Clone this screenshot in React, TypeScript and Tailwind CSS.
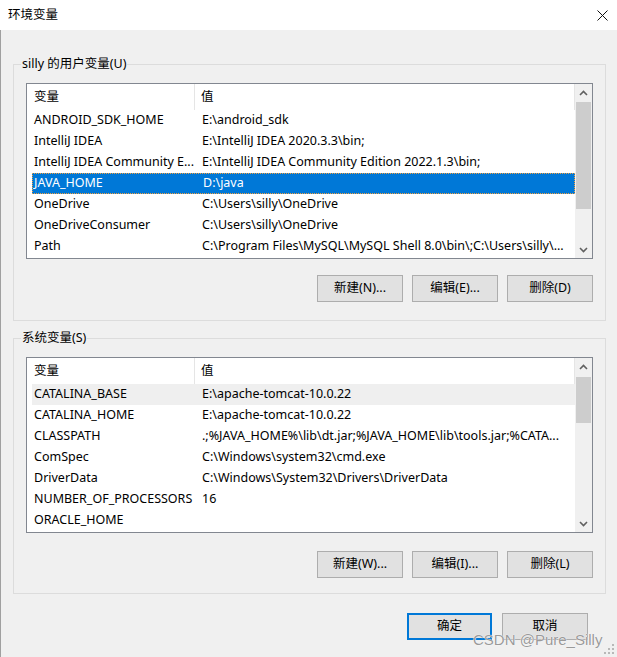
import React from "react";

type Row = { name: string; value: string; state?: "selected" | "hover" };

const userVars: Row[] = [
  { name: "ANDROID_SDK_HOME", value: "E:\\android_sdk" },
  { name: "IntelliJ IDEA", value: "E:\\IntelliJ IDEA 2020.3.3\\bin;" },
  { name: "IntelliJ IDEA Community E...", value: "E:\\IntelliJ IDEA Community Edition 2022.1.3\\bin;" },
  { name: "JAVA_HOME", value: "D:\\java", state: "selected" },
  { name: "OneDrive", value: "C:\\Users\\silly\\OneDrive" },
  { name: "OneDriveConsumer", value: "C:\\Users\\silly\\OneDrive" },
  { name: "Path", value: "C:\\Program Files\\MySQL\\MySQL Shell 8.0\\bin\\;C:\\Users\\silly\\..." },
];

const systemVars: Row[] = [
  { name: "CATALINA_BASE", value: "E:\\apache-tomcat-10.0.22", state: "hover" },
  { name: "CATALINA_HOME", value: "E:\\apache-tomcat-10.0.22" },
  { name: "CLASSPATH", value: ".;%JAVA_HOME%\\lib\\dt.jar;%JAVA_HOME\\lib\\tools.jar;%CATA..." },
  { name: "ComSpec", value: "C:\\Windows\\system32\\cmd.exe" },
  { name: "DriverData", value: "C:\\Windows\\System32\\Drivers\\DriverData" },
  { name: "NUMBER_OF_PROCESSORS", value: "16" },
  { name: "ORACLE_HOME", value: "" },
];

const Chevron = ({ down }: { down?: boolean }) => (
  <svg width="9" height="6" viewBox="0 0 9 6" className={down ? "rotate-180" : ""}>
    <path d="M1 5 L4.5 1.5 L8 5" fill="none" stroke="#606060" strokeWidth="1.6" />
  </svg>
);

const ScrollBar = ({ thumbTop, thumbHeight }: { thumbTop: number; thumbHeight: number }) => (
  <div className="w-[17px] h-full bg-[#f0f0f0] flex flex-col">
    <div className="h-[17px] flex items-center justify-center shrink-0">
      <Chevron />
    </div>
    <div className="flex-1 relative">
      <div
        className="absolute left-[1px] right-[1px] bg-[#cdcdcd]"
        style={{ top: thumbTop, height: thumbHeight }}
      />
    </div>
    <div className="h-[17px] flex items-center justify-center shrink-0">
      <Chevron down />
    </div>
  </div>
);

const VarList = ({ rows, thumbTop, thumbHeight }: { rows: Row[]; thumbTop: number; thumbHeight: number }) => (
  <div className="w-[567px] h-[176px] border border-[#828790] bg-white flex">
    <div className="flex-1 flex flex-col overflow-hidden">
      {/* Header */}
      <div className="h-[26px] flex items-center shrink-0">
        <div className="w-[168px] h-full flex items-center pl-[7px] border-r border-[#e5e5e5]">变量</div>
        <div className="flex-1 h-full flex items-center pl-[6px] border-r border-[#e5e5e5]">值</div>
      </div>
      {rows.map((r) => (
        <div
          key={r.name}
          className={
            "ml-[5px] h-[21px] shrink-0 flex items-center whitespace-nowrap overflow-hidden " +
            (r.state === "selected"
              ? "bg-[#0078d7] text-white border border-dotted border-[#f0a040]"
              : r.state === "hover"
              ? "bg-[#efefef]"
              : "")
          }
        >
          <div className={"w-[163px] shrink-0 overflow-hidden " + (r.state === "selected" ? "pl-[1px]" : "pl-[2px]")}>
            {r.name}
          </div>
          <div className="flex-1 overflow-hidden pl-[7px]">{r.value}</div>
        </div>
      ))}
    </div>
    <ScrollBar thumbTop={thumbTop} thumbHeight={thumbHeight} />
  </div>
);

const Button = ({ label, primary, w = "w-[86px]" }: { label: string; primary?: boolean; w?: string }) => (
  <button
    className={
      w +
      " h-[27px] bg-[#e1e1e1] flex items-center justify-center " +
      (primary ? "border-2 border-[#0078d7]" : "border border-[#adadad]")
    }
  >
    {label}
  </button>
);

const Group = ({
  title,
  children,
  className,
}: {
  title: string;
  children: React.ReactNode;
  className: string;
}) => (
  <div className={"relative w-[593px] border border-[#dcdcdc] pl-[12px] pt-[18px] " + className}>
    <span className="absolute -top-[9px] left-[7px] px-[1px] bg-[#f0f0f0] leading-[16px]">{title}</span>
    {children}
  </div>
);

export default function App() {
  return (
    <div
      className="w-[617px] h-[657px] bg-[#f0f0f0] text-[12.5px] text-black flex flex-col relative overflow-hidden"
      style={{ fontFamily: '"Noto Sans", "Noto Sans CJK SC", sans-serif' }}
    >
      {/* Title bar */}
      <div className="h-[30px] bg-white flex items-center justify-between pl-[8px] pr-[9px] shrink-0">
        <span>环境变量</span>
        <svg width="11" height="11" viewBox="0 0 11 11">
          <path d="M0.5 0.5 L10.5 10.5 M10.5 0.5 L0.5 10.5" stroke="#111" strokeWidth="1" />
        </svg>
      </div>

      <div className="flex-1 border-l border-[#a0a0a0] pl-[12px] flex flex-col">
        <Group title="silly 的用户变量(U)" className="mt-[34px] pb-[18px]">
          <VarList rows={userVars} thumbTop={1} thumbHeight={107} />
          <div className="flex mt-[16px] ml-[291px] gap-[9px]">
            <Button label="新建(N)..." />
            <Button label="编辑(E)..." />
            <Button label="删除(D)" />
          </div>
        </Group>

        <Group title="系统变量(S)" className="mt-[17px] pb-[15px]">
          <VarList rows={systemVars} thumbTop={2} thumbHeight={46} />
          <div className="flex mt-[18px] ml-[291px] gap-[9px]">
            <Button label="新建(W)..." />
            <Button label="编辑(I)..." />
            <Button label="删除(L)" />
          </div>
        </Group>

        <div className="flex mt-[19px] ml-[394px] gap-[10px]">
          <Button label="确定" primary w="w-[85px]" />
          <Button label="取消" />
        </div>
      </div>

      {/* Watermark */}
      <span
        className="absolute left-[473px] top-[631px] text-[15px] leading-[18px] text-[#9a9a9a] whitespace-nowrap"
        style={{ fontFamily: '"Liberation Sans", Arial, sans-serif', textShadow: "0 0 1px #fff, 0 0 1px #fff" }}
      >
        CSDN @Pure_Silly
      </span>

      {/* Resize grip */}
      <svg className="absolute right-[2px] bottom-[2px]" width="11" height="11" viewBox="0 0 11 11">
        {[
          [8, 0],
          [4, 4],
          [8, 4],
          [0, 8],
          [4, 8],
          [8, 8],
        ].map(([x, y]) => (
          <rect key={`${x}-${y}`} x={x} y={y} width="2" height="2" fill="#b8b8b8" />
        ))}
      </svg>
    </div>
  );
}
